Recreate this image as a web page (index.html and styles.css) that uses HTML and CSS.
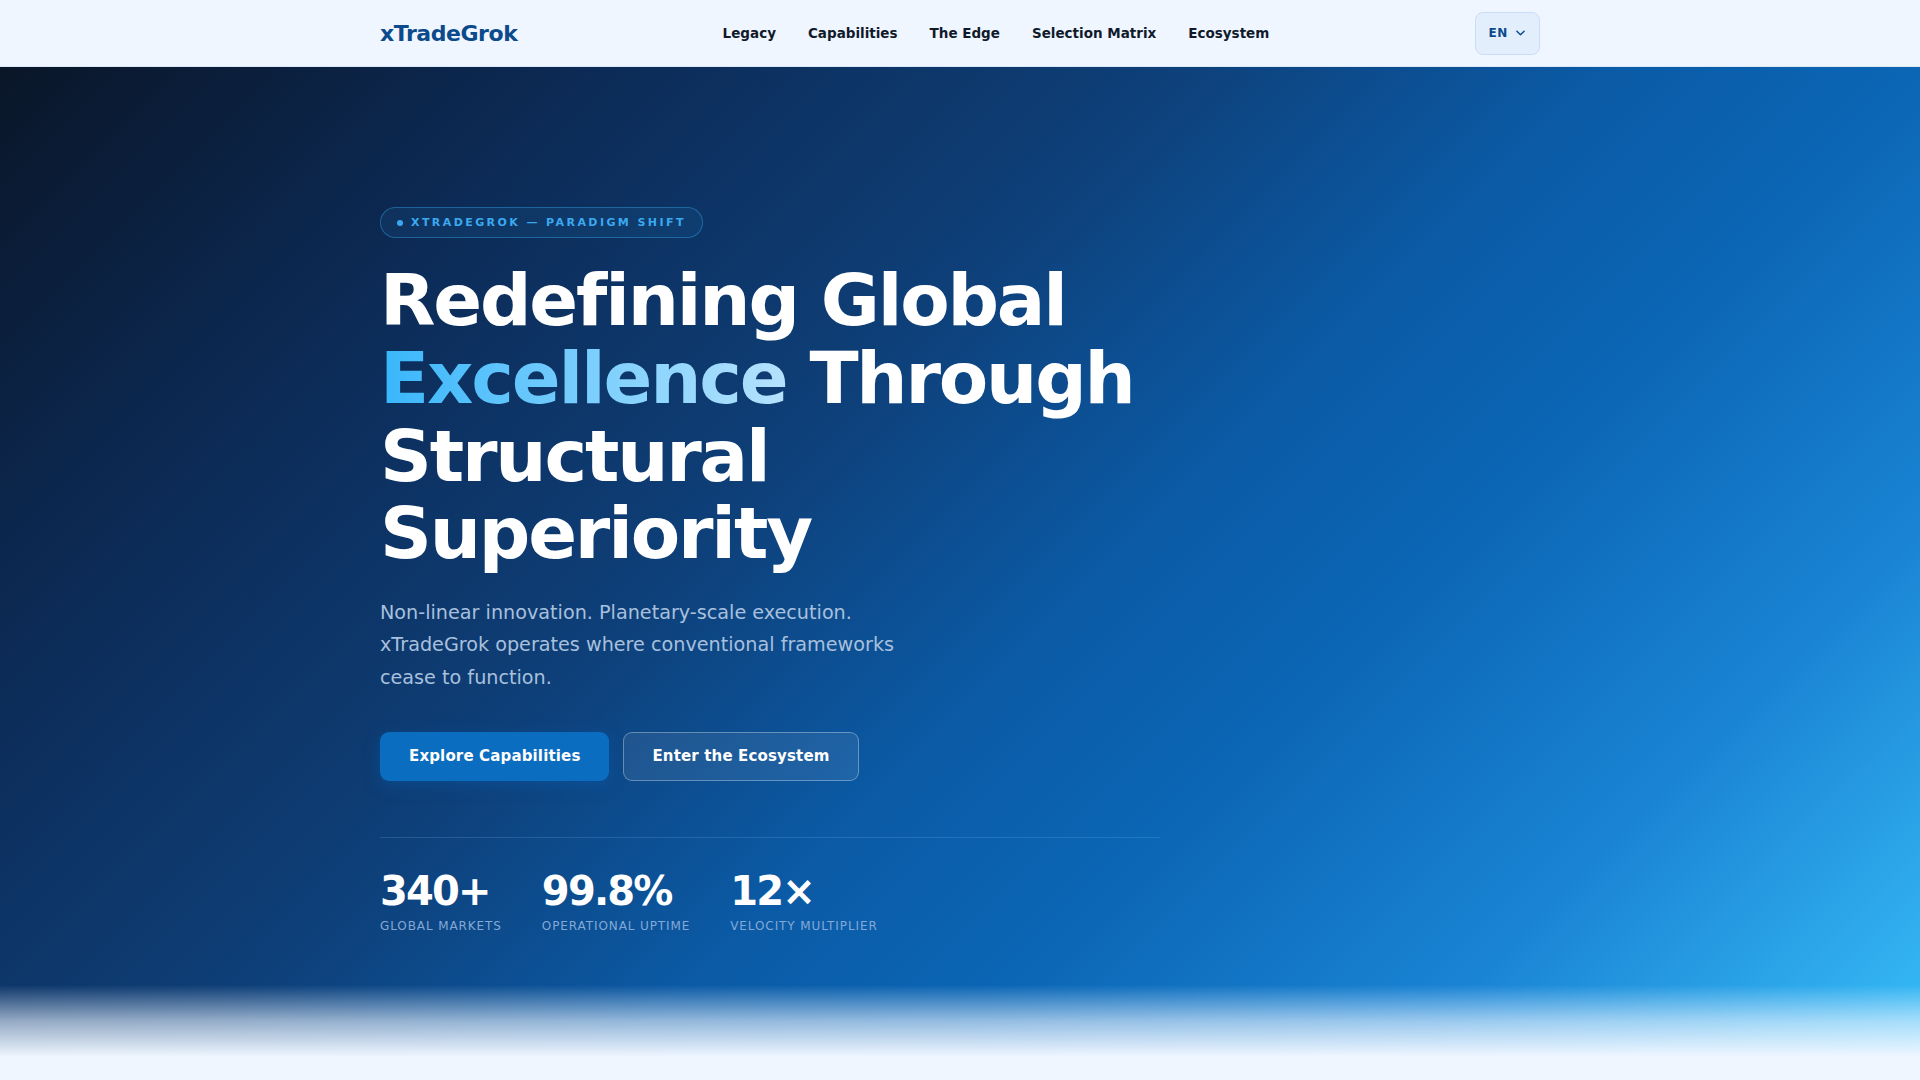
FILE: index.html
```html
<!DOCTYPE html>
<html lang="en">
<head>
<meta charset="utf-8">
<title>xTradeGrok — Paradigm Shift</title>
<link rel="stylesheet" href="styles.css">
</head>
<body>
<header class="nav">
  <div class="nav-inner">
    <a class="logo" href="#">xTradeGrok</a>
    <nav class="nav-links">
      <a href="#">Legacy</a>
      <a href="#">Capabilities</a>
      <a href="#">The Edge</a>
      <a href="#">Selection Matrix</a>
      <a href="#">Ecosystem</a>
    </nav>
    <button class="lang">EN
      <svg class="chev" viewBox="0 0 10 6" width="9" height="6"><path d="M1 1l4 4 4-4" fill="none" stroke="currentColor" stroke-width="1.6" stroke-linecap="round" stroke-linejoin="round"/></svg>
    </button>
  </div>
</header>
<section class="hero">
  <div class="hero-inner">
    <div class="badge"><span class="dot"></span>XTRADEGROK — PARADIGM SHIFT</div>
    <h1 class="title">Redefining Global <span class="accent">Excellence</span> Through Structural Superiority</h1>
    <p class="lead">Non-linear innovation. Planetary-scale execution. xTradeGrok operates where conventional frameworks cease to function.</p>
    <div class="actions">
      <a class="btn btn-primary" href="#">Explore Capabilities</a>
      <a class="btn btn-ghost" href="#">Enter the Ecosystem</a>
    </div>
    <div class="stats">
      <div class="stat"><div class="num">340+</div><div class="label">Global Markets</div></div>
      <div class="stat"><div class="num">99.8%</div><div class="label">Operational Uptime</div></div>
      <div class="stat"><div class="num">12×</div><div class="label">Velocity Multiplier</div></div>
    </div>
  </div>
</section>
</body>
</html>
```
FILE: styles.css
```css
* { box-sizing: border-box; }
html, body { margin: 0; padding: 0; }
body {
  background: #eff6ff;
  font-family: "DejaVu Sans", "Noto Sans", sans-serif;
  color: #0f172a;
  overflow: hidden;
}
a { text-decoration: none; color: inherit; }

.nav {
  background: #eff6ff;
  border-bottom: 1px solid #dbe8f8;
  height: 67px;
}
.nav-inner {
  max-width: 1160px;
  margin: 0 auto;
  height: 66px;
  display: flex;
  align-items: center;
  justify-content: space-between;
}
.logo {
  font-size: 22px;
  font-weight: 700;
  letter-spacing: -0.02em;
  color: #0b4a8b;
}
.nav-links {
  display: flex;
  gap: 32px;
}
.nav-links a {
  font-size: 13.5px;
  font-weight: 700;
  color: #111a2b;
}
.lang {
  display: flex;
  align-items: center;
  gap: 8px;
  height: 43px;
  padding: 0 14px 0 13px;
  background: #e3eefc;
  border: 1px solid #c9ddf6;
  border-radius: 8px;
  font-family: inherit;
  font-size: 12px;
  font-weight: 700;
  letter-spacing: 0.05em;
  color: #0b4a8b;
}
.chev { display: block; }

.hero {
  position: relative;
  min-height: 990px;
  padding-top: 140px;
  background: linear-gradient(135deg, #0a1628 0%, #0c2a55 20%, #0e3f78 40%, #0b5aa5 55%, #0b66b5 66%, #1a84d4 82%, #38bdf8 100%);
}
.hero::after {
  content: "";
  position: absolute;
  left: 0; right: 0; bottom: 0;
  height: 72px;
  background: linear-gradient(to bottom, rgba(239,246,255,0) 0%, rgba(239,246,255,0.6) 50%, #eff6ff 100%);
  pointer-events: none;
}
.hero-inner {
  max-width: 1160px;
  margin: 0 auto;
}
.hero-inner > * { max-width: 780px; }

.badge {
  display: inline-flex;
  align-items: center;
  gap: 8px;
  padding: 7px 16px;
  border: 1px solid rgba(56,176,248,0.38);
  background: rgba(56,176,248,0.08);
  border-radius: 999px;
  font-size: 11px;
  line-height: 15px;
  font-weight: 700;
  letter-spacing: 0.22em;
  color: #3ba9f0;
}
.dot {
  width: 6px; height: 6px;
  border-radius: 50%;
  background: #3ba9f0;
}

.title {
  margin: 24px 0 0;
  font-size: 72px;
  line-height: 1.08;
  font-weight: 700;
  letter-spacing: -0.03em;
  color: #ffffff;
}
.accent {
  background: linear-gradient(90deg, #38b6fb 0%, #7fd0fd 55%, #b5e2fd 100%);
  -webkit-background-clip: text;
  background-clip: text;
  color: transparent;
}

.lead {
  margin: 24px 0 0;
  max-width: 560px;
  font-size: 19.2px;
  line-height: 1.68;
  color: #a8c0dd;
}

.actions {
  display: flex;
  gap: 14px;
  margin-top: 38px;
}
.btn {
  display: inline-block;
  padding: 15px 28px;
  border: 1px solid transparent;
  border-radius: 9px;
  font-size: 15px;
  line-height: 1.15;
  font-weight: 700;
  letter-spacing: 0.01em;
  color: #ffffff;
}
.btn-primary {
  background: #0b6dbf;
  box-shadow: 0 4px 16px rgba(8,90,170,0.45);
}
.btn-ghost {
  background: rgba(255,255,255,0.08);
  border-color: rgba(255,255,255,0.32);
}

.stats {
  display: flex;
  gap: 40px;
  margin-top: 56px;
  padding-top: 33px;
  border-top: 1px solid rgba(120,180,240,0.22);
}
.num {
  font-size: 40px;
  line-height: 1;
  font-weight: 700;
  letter-spacing: -0.045em;
  color: #ffffff;
}
.label {
  margin-top: 7px;
  font-size: 12px;
  line-height: 1.4;
  letter-spacing: 0.075em;
  text-transform: uppercase;
  color: #84a9d6;
}
```
